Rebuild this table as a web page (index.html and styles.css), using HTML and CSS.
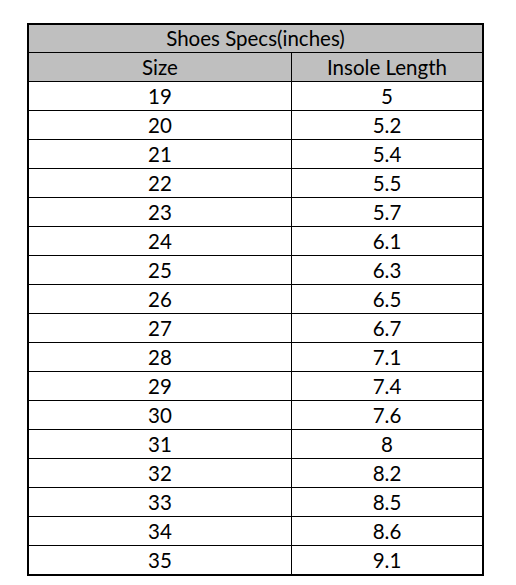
FILE: index.html
```html
<!DOCTYPE html>
<html>
<head>
<meta charset="utf-8">
<link rel="stylesheet" href="styles.css">
</head>
<body>
<table class="specs">
  <colgroup><col class="col1"><col class="col2"></colgroup>
  <thead>
    <tr class="title-row"><th colspan="2">Shoes Specs(inches)</th></tr>
    <tr class="head-row"><th class="c1">Size</th><th class="c2">Insole Length</th></tr>
  </thead>
  <tbody>
    <tr><td class="c1">19</td><td class="c2">5</td></tr>
    <tr><td class="c1">20</td><td class="c2">5.2</td></tr>
    <tr><td class="c1">21</td><td class="c2">5.4</td></tr>
    <tr><td class="c1">22</td><td class="c2">5.5</td></tr>
    <tr><td class="c1">23</td><td class="c2">5.7</td></tr>
    <tr><td class="c1">24</td><td class="c2">6.1</td></tr>
    <tr><td class="c1">25</td><td class="c2">6.3</td></tr>
    <tr><td class="c1">26</td><td class="c2">6.5</td></tr>
    <tr><td class="c1">27</td><td class="c2">6.7</td></tr>
    <tr><td class="c1">28</td><td class="c2">7.1</td></tr>
    <tr><td class="c1">29</td><td class="c2">7.4</td></tr>
    <tr><td class="c1">30</td><td class="c2">7.6</td></tr>
    <tr><td class="c1">31</td><td class="c2">8</td></tr>
    <tr><td class="c1">32</td><td class="c2">8.2</td></tr>
    <tr><td class="c1">33</td><td class="c2">8.5</td></tr>
    <tr><td class="c1">34</td><td class="c2">8.6</td></tr>
    <tr class="last"><td class="c1">35</td><td class="c2">9.1</td></tr>
  </tbody>
</table>
</body>
</html>
```
FILE: styles.css
```css
html, body {
  margin: 0;
  padding: 0;
  background: #fff;
}
body {
  padding: 23px 0 0 27px;
  font-family: Lato, "Open Sans", "Liberation Sans", sans-serif;
  color: #000;
}
.specs {
  border-collapse: separate;
  border-spacing: 0;
  border: 2px solid #000;
  width: 457px;
  table-layout: fixed;
}
.specs .col1 {
  width: 262px;
}
.specs th, .specs td {
  padding: 0;
  height: 28px;
  text-align: center;
  vertical-align: middle;
  font-size: 20.5px;
  font-weight: normal;
  line-height: 28px;
  border-bottom: 1px solid #000;
}
.specs .title-row th {
  height: 27px;
  line-height: 27px;
}
.specs thead th {
  background: #bfbfbf;
}
.specs .c2 {
  border-left: 1px solid #000;
}
.specs .last td {
  border-bottom: none;
}
```
